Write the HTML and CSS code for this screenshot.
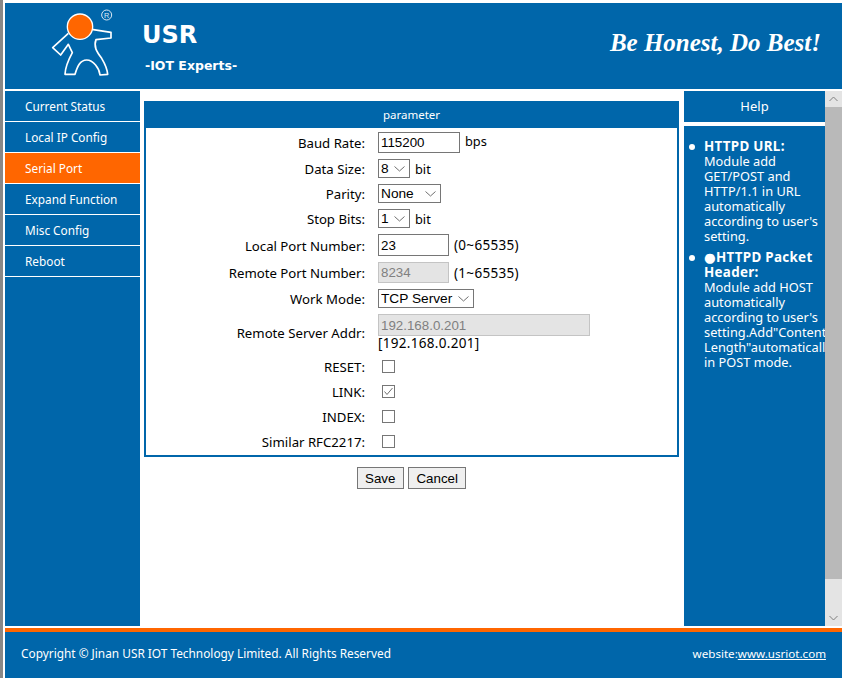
FILE: index.html
```html
<!DOCTYPE html>
<html lang="en">
<head>
<meta charset="utf-8">
<title>USR IOT</title>
<link rel="stylesheet" href="styles.css">
</head>
<body>
<div class="page">
  <header class="top">
    <svg class="logo" viewBox="0 0 240 240" width="80" height="80" aria-hidden="true">
      <path class="logo-body" d="M155 73 L213 82 L213 99 L168 104 C160 125 170 140 185 160 C197 180 202 195 203 208 L180 210 C178 190 160 165 140 165 C120 165 112 185 105 208 L75 208 C76 185 85 165 97 143 L85 118 L62 150 L38 128 L85 85"/>
      <circle class="logo-head" cx="120" cy="65" r="38"/>
      <circle class="logo-reg" cx="200" cy="30" r="15"/>
      <text class="logo-r" x="200" y="38">R</text>
    </svg>
    <div class="brand">
      <div class="brand-name">USR</div>
      <div class="brand-sub">-IOT Experts-</div>
    </div>
    <div class="motto">Be Honest, Do Best!</div>
  </header>
  <div class="main">
    <nav class="side">
      <a class="side-item">Current Status</a>
      <a class="side-item">Local IP Config</a>
      <a class="side-item active">Serial Port</a>
      <a class="side-item">Expand Function</a>
      <a class="side-item">Misc Config</a>
      <a class="side-item">Reboot</a>
    </nav>
    <section class="content">
      <div class="panel">
        <div class="panel-title">parameter</div>
        <div class="form">
          <label class="lbl">Baud Rate:</label>
          <div class="ctl"><input class="field w-baud" value="115200"><span class="note raised">bps</span></div>
          <label class="lbl">Data Size:</label>
          <div class="ctl"><select class="pick w-small h-20"><option>8</option></select><span class="note">bit</span></div>
          <label class="lbl">Parity:</label>
          <div class="ctl"><select class="pick w-parity"><option>None</option></select></div>
          <label class="lbl">Stop Bits:</label>
          <div class="ctl"><select class="pick w-small"><option>1</option></select><span class="note">bit</span></div>
          <label class="lbl">Local Port Number:</label>
          <div class="ctl"><input class="field w-port h-22" value="23"><span class="note num">(0~65535)</span></div>
          <label class="lbl">Remote Port Number:</label>
          <div class="ctl"><input class="field w-port off" value="8234" disabled><span class="note num">(1~65535)</span></div>
          <label class="lbl">Work Mode:</label>
          <div class="ctl"><select class="pick w-mode"><option>TCP Server</option></select></div>
          <label class="lbl">Remote Server Addr:</label>
          <div class="ctl stack"><input class="field w-addr h-22 off" value="192.168.0.201" disabled><span class="note num addr-note">[192.168.0.201]</span></div>
          <label class="lbl">RESET:</label>
          <div class="ctl chk-row"><input class="box" type="checkbox"></div>
          <label class="lbl">LINK:</label>
          <div class="ctl chk-row"><input class="box" type="checkbox" checked></div>
          <label class="lbl">INDEX:</label>
          <div class="ctl chk-row"><input class="box" type="checkbox"></div>
          <label class="lbl">Similar RFC2217:</label>
          <div class="ctl chk-row"><input class="box" type="checkbox"></div>
        </div>
      </div>
      <div class="actions">
        <button class="btn" type="button">Save</button>
        <button class="btn" type="button">Cancel</button>
      </div>
    </section>
    <aside class="help">
      <div class="help-title">Help</div>
      <div class="help-body">
        <ul class="help-list">
          <li><b>HTTPD URL:</b><br>Module add GET/POST and HTTP/1.1 in URL automatically according to user's setting.</li>
          <li><b>●HTTPD Packet Header:</b><br>Module add HOST automatically according to user's setting.Add"Content-Length"automatically in POST mode.</li>
        </ul>
      </div>
    </aside>
    <div class="scroll">
      <div class="scroll-btn"><svg viewBox="0 0 17 16" width="17" height="16" aria-hidden="true"><path class="chev" d="M4.5 10 L8.5 6 L12.5 10"/></svg></div>
      <div class="scroll-thumb"></div>
      <div class="scroll-track"></div>
      <div class="scroll-btn"><svg viewBox="0 0 17 16" width="17" height="16" aria-hidden="true"><path class="chev" d="M4.5 6 L8.5 10 L12.5 6"/></svg></div>
    </div>
  </div>
  <footer class="foot">
    <span>Copyright © Jinan USR IOT Technology Limited. All Rights Reserved</span>
    <span class="foot-site">website:<a class="foot-link">www.usriot.com</a></span>
  </footer>
</div>
</body>
</html>
```
FILE: styles.css
```css
* { box-sizing: border-box; }
html, body { margin: 0; padding: 0; background: #fff; overflow: hidden; }
body { font-family: "Noto Sans", "DejaVu Sans", sans-serif; font-size: 13.2px; color: #000; }
.page {
  height: 678px;
  border-left: 3px solid #888;
  padding: 3px 0 0 2px;
  display: flex;
  flex-direction: column;
}
.top {
  height: 86px;
  background: #0066aa;
  color: #fff;
  display: flex;
  align-items: flex-start;
  flex: none;
}
.logo { margin: 2px 0 0 35px; flex: none; }
.logo-body { fill: none; stroke: #fff; stroke-width: 5; stroke-linejoin: round; }
.logo-head { fill: #ff6600; stroke: #fff; stroke-width: 4; }
.logo-reg { fill: none; stroke: #dbe9f4; stroke-width: 3; }
.logo-r { fill: #dbe9f4; font-family: "Liberation Sans", sans-serif; font-size: 22px; text-anchor: middle; }
.brand { margin-left: 22px; padding-top: 16px; }
.brand-name { font-family: "DejaVu Sans", sans-serif; font-weight: bold; font-size: 24px; line-height: 32px; }
.brand-sub { font-family: "DejaVu Sans", sans-serif; font-weight: bold; font-size: 12.5px; line-height: 16px; margin: 7px 0 0 3px; }
.motto {
  margin-left: auto;
  padding: 23px 21px 0 0;
  font-family: "Liberation Serif", serif;
  font-style: italic;
  font-weight: bold;
  font-size: 25px;
  line-height: 34px;
}
.main { height: 535px; margin-top: 2px; display: flex; flex: none; }
.side { width: 135px; background: #0066aa; flex: none; }
.side-item {
  display: block;
  height: 31px;
  line-height: 30px;
  padding-left: 20px;
  font-size: 11.8px;
  color: #fff;
  border-bottom: 1px solid #fff;
}
.side-item.active { background: #ff6600; }
.content { width: 544px; padding: 10px 5px 0 4px; flex: none; }
.panel { border: 2px solid #0066aa; height: 356px; border-top: 0; }
.panel-title {
  background: #0066aa;
  color: #fff;
  text-align: center;
  height: 27px;
  line-height: 28px;
  font-size: 11.5px;
  margin: 0 -2px;
}
.form {
  display: grid;
  grid-template-columns: 219px 1fr;
  column-gap: 13px;
  row-gap: 6px;
  padding-top: 4px;
  align-items: center;
}
.lbl { text-align: right; padding-top: 1px; }
.ctl { display: flex; align-items: center; gap: 5px; }
.stack { flex-direction: column; align-items: flex-start; gap: 0; height: 37px; }
.chk-row { height: 19px; }
.note { font-size: 12.8px; }
.raised { margin-bottom: 3px; }
.num { font-size: 13.5px; letter-spacing: 0.3px; }
.addr-note { line-height: 15px; }
.field {
  height: 21px;
  border: 1px solid #767676;
  padding: 0 2px;
  margin: 0;
  background: #fff;
  color: #000;
  font-family: "Liberation Sans", sans-serif;
  font-size: 13.33px;
  border-radius: 0;
}
.field.off { background: #e4e4e4; border-color: #c4c4c4; color: #808080; }
.h-22 { height: 22px; }
.h-20 { height: 20px; }
.w-baud { width: 82px; }
.w-port { width: 71px; }
.w-addr { width: 212px; }
.pick {
  appearance: none;
  -webkit-appearance: none;
  height: 19px;
  margin: 0;
  padding: 0 0 0 2px;
  border: 1px solid #767676;
  border-radius: 0;
  color: #000;
  font-family: "Liberation Sans", sans-serif;
  font-size: 13.7px;
  background-color: #fff;
  background-image: url("data:image/svg+xml,%3Csvg xmlns='http://www.w3.org/2000/svg' width='11' height='6'%3E%3Cpath d='M.5.5 5.5 5 10.5.5' fill='none' stroke='%23707070'/%3E%3C/svg%3E");
  background-repeat: no-repeat;
  background-position: right 4px center;
}
.w-small { width: 32px; }
.w-parity { width: 63px; }
.w-mode { width: 96px; }
.box {
  appearance: none;
  -webkit-appearance: none;
  width: 13px;
  height: 13px;
  margin: 0 0 0 4px;
  border: 1px solid #767676;
  background: #fff;
  border-radius: 0;
}
.box:checked {
  background-image: url("data:image/svg+xml,%3Csvg xmlns='http://www.w3.org/2000/svg' width='11' height='11'%3E%3Cpath d='M1.5 5.5 4 8.5 9.5 2' fill='none' stroke='%23707070'/%3E%3C/svg%3E");
  background-repeat: no-repeat;
  background-position: center;
}
.actions { display: flex; justify-content: center; gap: 4px; margin-top: 10px; }
.btn {
  height: 22px;
  padding: 0 7.5px;
  border: 1px solid #767676;
  border-radius: 0;
  background: #efefef;
  color: #000;
  font-family: "Liberation Sans", sans-serif;
  font-size: 13.33px;
}
.help { width: 141px; flex: none; display: flex; flex-direction: column; gap: 4px; color: #fff; overflow: hidden; }
.help-title { height: 31px; background: #0066aa; text-align: center; line-height: 31px; font-size: 13px; flex: none; }
.help-body { flex: 1; background: #0066aa; overflow: hidden; padding-top: 13px; }
.help-list { margin: 0; padding: 0 0 0 20px; width: 141px; font-size: 12.8px; line-height: 15px; list-style: none; }
.help-list li { position: relative; margin-bottom: 6px; }
.help-list li::before {
  content: "";
  position: absolute;
  left: -15px;
  top: 5px;
  width: 6px;
  height: 6px;
  border-radius: 50%;
  background: #fff;
}
.help-list b { font-weight: bold; font-size: 13.4px; letter-spacing: 0.3px; }
.scroll { width: 17px; flex: none; display: flex; flex-direction: column; background: #e4e4e4; }
.scroll-btn { height: 16px; flex: none; line-height: 0; }
.scroll-thumb { height: 472px; background: #b9b9b9; flex: none; }
.scroll-track { flex: 1; }
.chev { fill: none; stroke: #808080; stroke-width: 1; }
.foot {
  margin-top: 2px;
  flex: 1;
  border-top: 4px solid #ff6600;
  background: #0066aa;
  color: #fff;
  display: flex;
  justify-content: space-between;
  align-items: center;
  padding: 0 16px 4px;
  font-size: 11.85px;
}
.foot-site { font-size: 11.6px; }
.foot-link { color: #fff; text-decoration: underline; }
```
